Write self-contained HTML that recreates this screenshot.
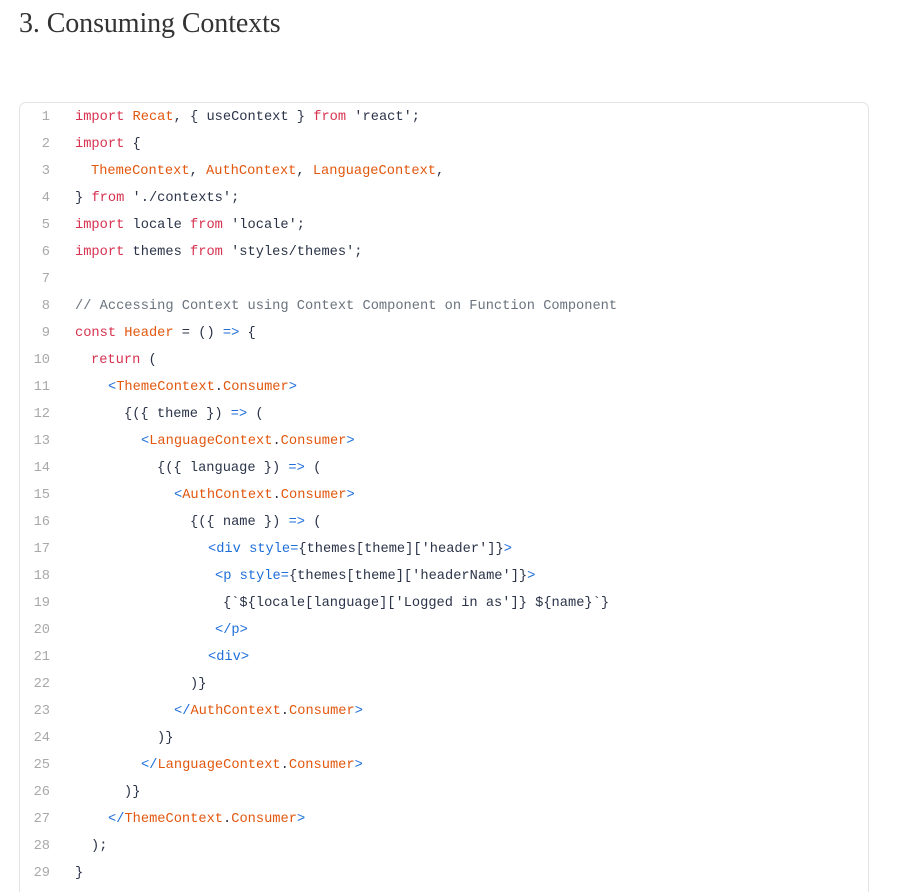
<!DOCTYPE html>
<html style="height:892px;overflow:hidden"><head><meta charset="utf-8"><style>
body{margin:0;background:#fff;width:898px;height:892px;overflow:hidden;position:relative}
h2{position:absolute;left:19px;top:8px;margin:0;font:400 28px "Liberation Serif",serif;color:#333;letter-spacing:-0.1px;white-space:nowrap}
.box{position:absolute;left:19px;top:102px;width:848px;height:800px;border:1px solid #e3e3e3;border-radius:7px;}
.l{position:absolute;left:0;height:27px;line-height:27px;font:13.7px "Liberation Mono",monospace;white-space:pre;color:#2a3348}
.n{position:absolute;left:0;width:31px;text-align:right;color:#a9a9a9}
.c{position:absolute}
.k{color:#d7324f}.o{color:#e2570e}.b{color:#1d6ed8}.g{color:#6a737d}
</style></head><body>
<h2>3. Consuming Contexts</h2>
<div class="box"></div>
<div id="code"></div>
<script>
const lines=[
[75,'<span class="k">import</span> <span class="o">Recat</span>, { useContext } <span class="k">from</span> \'react\';'],
[75,'<span class="k">import</span> {'],
[91,'<span class="o">ThemeContext</span>, <span class="o">AuthContext</span>, <span class="o">LanguageContext</span>,'],
[75,'} <span class="k">from</span> \'./contexts\';'],
[75,'<span class="k">import</span> locale <span class="k">from</span> \'locale\';'],
[75,'<span class="k">import</span> themes <span class="k">from</span> \'styles/themes\';'],
[75,''],
[75,'<span class="g">// Accessing Context using Context Component on Function Component</span>'],
[75,'<span class="k">const</span> <span class="o">Header</span> = () <span class="b">=&gt;</span> {'],
[91,'<span class="k">return</span> ('],
[108,'<span class="b">&lt;</span><span class="o">ThemeContext</span>.<span class="o">Consumer</span><span class="b">&gt;</span>'],
[124,'{({ theme }) <span class="b">=&gt;</span> ('],
[141,'<span class="b">&lt;</span><span class="o">LanguageContext</span>.<span class="o">Consumer</span><span class="b">&gt;</span>'],
[157,'{({ language }) <span class="b">=&gt;</span> ('],
[174,'<span class="b">&lt;</span><span class="o">AuthContext</span>.<span class="o">Consumer</span><span class="b">&gt;</span>'],
[190,'{({ name }) <span class="b">=&gt;</span> ('],
[208,'<span class="b">&lt;div style=</span>{themes[theme][\'header\']}<span class="b">&gt;</span>'],
[215,'<span class="b">&lt;p style=</span>{themes[theme][\'headerName\']}<span class="b">&gt;</span>'],
[223,'{`${locale[language][\'Logged in as\']} ${name}`}'],
[215,'<span class="b">&lt;/p&gt;</span>'],
[208,'<span class="b">&lt;div&gt;</span>'],
[190,')}'],
[174,'<span class="b">&lt;/</span><span class="o">AuthContext</span>.<span class="o">Consumer</span><span class="b">&gt;</span>'],
[157,')}'],
[141,'<span class="b">&lt;/</span><span class="o">LanguageContext</span>.<span class="o">Consumer</span><span class="b">&gt;</span>'],
[124,')}'],
[108,'<span class="b">&lt;/</span><span class="o">ThemeContext</span>.<span class="o">Consumer</span><span class="b">&gt;</span>'],
[91,');'],
[75,'}']
];
let h='';
lines.forEach((l,i)=>{const top=110+i*27;
h+=`<div class="l" style="top:${top}px;width:898px"><span class="n" style="left:19px">${i+1}</span><span class="c" style="left:${l[0]}px">${l[1]}</span></div>`;});
document.getElementById('code').innerHTML=h;
</script>
</body></html>
